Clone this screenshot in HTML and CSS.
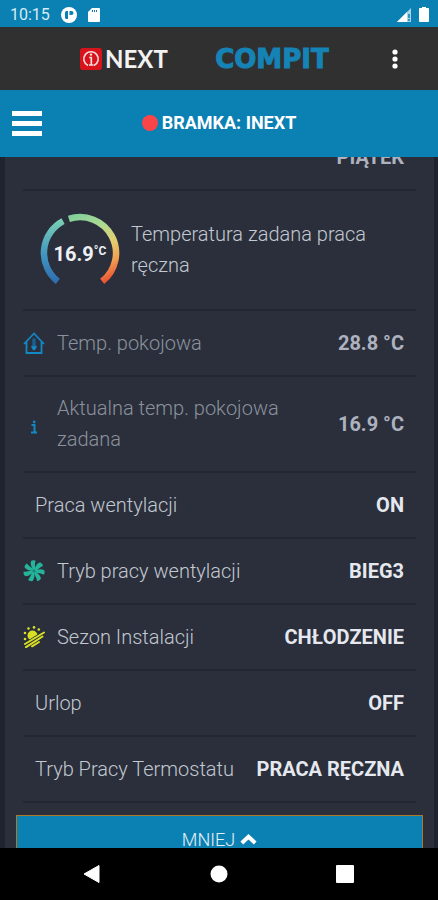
FILE: index.html
```html
<!DOCTYPE html>
<html lang="pl">
<head>
<meta charset="utf-8">
<meta name="viewport" content="width=device-width, initial-scale=1">
<title>Bramka: iNEXT</title>
<link rel="stylesheet" href="styles.css">
</head>
<body>
<div class="status">
  <span class="clock">10:15</span>
  <svg width="16" height="16" viewBox="0 0 16 16"><circle cx="8" cy="8" r="8" fill="#fff"/><path d="M4 5.500Q4 4 5.500 4H7V12H5.500Q4 12 4 10.500ZM8.500 4H10.500A2 2 0 0 1 10.500 8H8.500Z" fill="#0b80b3"/></svg>
  <svg width="12" height="14" viewBox="0 0 12 14"><path d="M4 0H11Q12 0 12 1V13Q12 14 11 14H1Q0 14 0 13V4Z" fill="#fff"/><path d="M4.500 2V4M6.500 2V4M8.500 2V4" stroke="#0b80b3"/></svg>
  <span class="spacer"></span>
  <svg width="15" height="14" viewBox="0 0 15 14"><path d="M0 14 14 0V14Z" fill="#a9d3e6"/><path d="M0 14 10 4V14Z" fill="#fff"/><path d="M12 6V10M12 11V13" stroke="#0b80b3" stroke-width="1.500"/></svg>
  <svg width="10" height="15" viewBox="0 0 10 15"><path d="M3 0H7V1H9Q10 1 10 2V14Q10 15 9 15H1Q0 15 0 14V2Q0 1 1 1H3Z" fill="#fff"/></svg>
</div>
<div class="brandbar">
  <div class="next">
    <svg width="22" height="22" viewBox="0 0 22 22"><rect width="22" height="22" rx="3" fill="#d9131b"/><path d="M8 17.500A7.200 7.200 0 1 1 14 17.500" fill="none" stroke="#f3dede" stroke-width="1.700"/><path d="M9.200 9.500H11.300V17M9 17H13.500" fill="none" stroke="#f3dede" stroke-width="1.700"/><circle cx="11" cy="6.600" r="1.200" fill="#f3dede"/></svg>
    <span>NEXT</span>
  </div>
  <div class="compit">COMPIT</div>
  <button class="more" aria-label="Więcej opcji"><svg width="6" height="20" viewBox="0 0 6 20"><g fill="#fff"><circle cx="3" cy="3" r="2.600"/><circle cx="3" cy="10" r="2.600"/><circle cx="3" cy="17" r="2.600"/></g></svg></button>
</div>
<header class="header">
  <button class="menu" aria-label="Menu"><svg width="30" height="25" viewBox="0 0 30 25"><path d="M0 2.500H30M0 12.500H30M0 22.500H30" stroke="#fff" stroke-width="5"/></svg></button>
  <h1><span class="dot"></span>BRAMKA: INEXT</h1>
</header>
<main>
  <section class="panel">
    <ul class="list">
      <li class="row dim"><span class="label"></span><span class="value">PIĄTEK</span></li>
      <li class="row set">
        <div class="gauge">
          <svg width="80" height="80" viewBox="0 0 80 80">
            <defs>
              <linearGradient id="cold" x1="0" y1="1" x2="0" y2="0"><stop offset="0" stop-color="#2f6fb0"/><stop offset=".45" stop-color="#4196c0"/><stop offset="1" stop-color="#78ceb5"/></linearGradient>
              <linearGradient id="warm" gradientUnits="userSpaceOnUse" x1="30" y1="4" x2="66" y2="70"><stop offset="0" stop-color="#82cf9c"/><stop offset=".3" stop-color="#aedc90"/><stop offset=".55" stop-color="#e4ce72"/><stop offset=".78" stop-color="#efa052"/><stop offset="1" stop-color="#ec4c31"/></linearGradient>
            </defs>
            <g fill="none" stroke-width="6.500"><path d="M17.800 68.400A36 36 0 0 1 23.100 8.200" stroke="url(#cold)"/><path d="M28.900 5.800A36 36 0 0 1 62.200 68.400" stroke="url(#warm)"/></g>
          </svg>
          <span class="reading">16.9<sup>°C</sup></span>
        </div>
        <span class="label">Temperatura zadana praca ręczna</span>
      </li>
      <li class="row dim">
        <svg class="icon" viewBox="0 0 22 22"><g fill="none" stroke="#1288c4"><path d="M1 12 11 1.500 21 12M3.500 10V21H18.500V10" stroke-width="1.800"/><path d="M11 6.500V15" stroke="#1a5f91" stroke-width="3.500"/><path d="M8.500 14 11 17.500 13.500 14" stroke-width="1.500"/></g><circle cx="11" cy="16" r="2" fill="#1288c4"/></svg>
        <span class="label">Temp. pokojowa</span><span class="value">28.8 °C</span>
      </li>
      <li class="row dim">
        <svg class="icon" viewBox="0 0 22 22"><path d="M8.500 12H11.500V19M8 19.500H14" fill="none" stroke="#1288c4" stroke-width="2"/><circle cx="11.200" cy="9" r="1.400" fill="#1288c4"/></svg>
        <span class="label">Aktualna temp. pokojowa zadana</span><span class="value">16.9 °C</span>
      </li>
      <li class="row plain"><span class="label">Praca wentylacji</span><span class="value">ON</span></li>
      <li class="row">
        <svg class="icon" viewBox="0 0 22 22"><defs><path id="blade" d="M11 11.500C9.200 8.500 6.800 4.500 8 1.300C9 .1 11.800 0 12.600 .8C11.400 3.500 12.600 7 11.800 11Z"/></defs><g fill="#25b39a"><use href="#blade"/><use href="#blade" transform="rotate(51.400 11 11)"/><use href="#blade" transform="rotate(102.900 11 11)"/><use href="#blade" transform="rotate(154.300 11 11)"/><use href="#blade" transform="rotate(205.700 11 11)"/><use href="#blade" transform="rotate(257.100 11 11)"/><use href="#blade" transform="rotate(308.600 11 11)"/></g><circle cx="11" cy="11" r="1.500" fill="#1d8078"/></svg>
        <span class="label">Tryb pracy wentylacji</span><span class="value">BIEG3</span>
      </li>
      <li class="row">
        <svg class="icon" viewBox="0 0 22 22"><circle cx="9.500" cy="9.500" r="5" fill="#d9df22"/><path d="M2 20.500 21 8.500" stroke="#2a2f3b" stroke-width="7"/><g fill="none" stroke="#d9df22" stroke-linecap="round"><path d="M2 18 21 6.500" stroke-width="2"/><path d="M3 21.200 19.500 10.500" stroke-width="2"/><path d="M9 20.300 16 16" stroke-width="2"/></g><g fill="#d9df22"><circle cx="5.500" cy="2.500" r="1.300"/><circle cx="11" cy="1.400" r="1.300"/><circle cx="15.800" cy="3.500" r="1.300"/><circle cx="2" cy="7" r="1.300"/><circle cx="2" cy="13" r="1.300"/></g></svg>
        <span class="label">Sezon Instalacji</span><span class="value">CHŁODZENIE</span>
      </li>
      <li class="row plain"><span class="label">Urlop</span><span class="value">OFF</span></li>
      <li class="row plain"><span class="label">Tryb Pracy Termostatu</span><span class="value">PRACA RĘCZNA</span></li>
    </ul>
    <button class="less">MNIEJ <svg width="17" height="11" viewBox="0 0 17 11"><path d="M1.800 9 8.500 2.800 15.200 9" fill="none" stroke="#fff" stroke-width="4"/></svg></button>
  </section>
</main>
<nav class="nav">
  <button aria-label="Wstecz"><svg width="18" height="20" viewBox="0 0 18 20"><path d="M1 10 16 1.500V18.500Z" fill="#fff" stroke="#fff" stroke-linejoin="round"/></svg></button>
  <button aria-label="Ekran główny"><svg width="18" height="18" viewBox="0 0 18 18"><circle cx="9" cy="9" r="8.500" fill="#fff"/></svg></button>
  <button aria-label="Ostatnie"><svg width="18" height="18" viewBox="0 0 18 18"><rect width="18" height="18" rx="1" fill="#fff"/></svg></button>
</nav>
</body>
</html>
```
FILE: styles.css
```css
* { box-sizing: border-box; }

body {
  margin: 0;
  height: 100vh;
  display: flex;
  flex-direction: column;
  overflow: hidden;
  background: #1f2330;
  color: #c3c8d1;
  font: 300 20px/31px Roboto, sans-serif;
}

svg { display: block; flex: none; }

button {
  padding: 0;
  border: 0;
  background: none;
  color: inherit;
  font: inherit;
}

.status {
  flex: none;
  display: flex;
  align-items: center;
  gap: 11px;
  height: 27px;
  padding: 2px 9px 0 10px;
  background: #0b80b3;
}

.clock {
  color: #d6ebf5;
  font-size: 16px;
  font-weight: 400;
}

.spacer { flex: 1; }
.status .spacer + svg { margin-right: -4px; }

.brandbar {
  flex: none;
  display: flex;
  align-items: center;
  height: 63px;
  padding: 0 36px 0 80px;
  background: #303030;
}

.next {
  display: flex;
  align-items: center;
  gap: 3px;
  color: #f2f2f2;
  font: 700 24px/26px Lato, sans-serif;
}

.compit {
  flex: 1;
  padding-right: 12px;
  text-align: center;
  color: #1583b5;
  font: 700 26px/26px "DejaVu Sans", sans-serif;
  -webkit-text-stroke: 1px #1583b5;
}

.more {
  display: flex;
  justify-content: center;
  width: 14px;
}

.header {
  flex: none;
  display: grid;
  grid-template-columns: 30px 1fr 30px;
  align-items: center;
  height: 67px;
  padding: 0 12px;
  background: #0b80b3;
  color: #fff;
}

h1 {
  display: flex;
  align-items: center;
  justify-content: center;
  gap: 4px;
  margin: 0;
  padding-bottom: 2px;
  font-size: 18px;
  font-weight: 700;
}

.dot {
  width: 16px;
  height: 16px;
  border-radius: 50%;
  background: #fb4549;
}

main {
  flex: 1;
  min-height: 0;
  overflow: hidden;
  padding: 0 4px 0 5px;
}

/* The panel is scrolled so that its first row is half hidden. */
.panel {
  margin-top: -32px;
  padding: 0 11px 20px;
  background: #2a2f3b;
}

.list {
  margin: 0;
  padding: 0 7px;
  list-style: none;
}

.row {
  display: flex;
  align-items: center;
  gap: 12px;
  min-height: 66px;
  padding: 16px 12px 16px 0;
  border-bottom: 2px solid #222734;
}

.plain { padding-left: 12px; }
.label { flex: 1; }
.icon { width: 22px; height: 22px; }

.value {
  color: #e6e8ef;
  font-weight: 700;
  white-space: nowrap;
}

.dim { color: #8c929d; }
.dim .value { color: #aeb2bf; }

.set {
  min-height: 120px;
  padding-left: 17px;
  padding-right: 36px;
  gap: 11px;
}

.gauge {
  display: grid;
  padding-top: 5px;
}
.gauge > * { grid-area: 1 / 1; }

.reading {
  display: flex;
  align-items: center;
  justify-content: center;
  padding-top: 4px;
  color: #eef0f6;
  font-weight: 700;
}

.reading sup {
  padding-bottom: 8px;
  font-size: 12px;
  line-height: 12px;
}

.less {
  display: flex;
  align-items: center;
  justify-content: center;
  gap: 5px;
  width: 100%;
  height: 48px;
  margin-top: 12px;
  border: 1px solid #a97a2c;
  background: #0b80b3;
  color: #e6f1f7;
  font-size: 18px;
}

.nav {
  flex: none;
  display: flex;
  align-items: center;
  justify-content: space-between;
  height: 52px;
  padding: 0 84px 0 83px;
  background: #000;
}
```
